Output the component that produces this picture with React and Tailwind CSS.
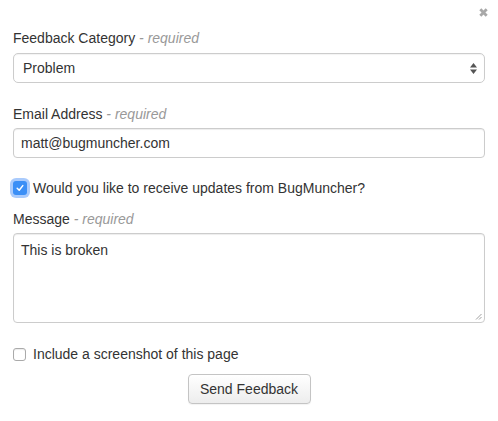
const Req = () => <span className="text-[#999] italic"> - required</span>;

export default function App() {
  return (
    <div className="relative w-[498px] h-[421px] bg-white text-[#333] text-[14px] leading-[20px] px-[13px] pt-[28px] font-['Liberation_Sans',Arial,sans-serif]">
      {/* close */}
      <svg className="absolute right-[10px] top-[8px]" width="9" height="9" viewBox="0 0 9 9">
        <path d="M1.3 1.3 L7.7 7.7 M7.7 1.3 L1.3 7.7" stroke="#a8a8a8" strokeWidth="2.8" strokeLinecap="butt" />
      </svg>

      <div className="mb-[5px]">Feedback Category<Req /></div>
      <div className="relative h-[30px] border border-[#ccc] rounded-[5px] flex items-center pl-[9px] shadow-[inset_0_1px_1px_rgba(0,0,0,0.05)]">
        Problem
        <svg className="absolute right-[7px] top-[9px]" width="7" height="11" viewBox="0 0 7 11">
          <path d="M3.5 0 L7 4.5 L0 4.5 Z M3.5 11 L7 6.5 L0 6.5 Z" fill="#555" />
        </svg>
      </div>

      <div className="mt-[21px] mb-[4px]">Email Address<Req /></div>
      <div className="h-[30px] border border-[#ccc] rounded-[4px] flex items-center pl-[7px] shadow-[inset_0_1px_1px_rgba(0,0,0,0.075)]">
        matt@bugmuncher.com
      </div>

      <div className="mt-[20px] flex items-center gap-[6px]">
        <span className="w-[14px] h-[14px] rounded-[3px] bg-[#3b8ff6] flex items-center justify-center shadow-[0_0_0_3px_rgba(100,160,250,0.55)]">
          <svg width="8" height="8" viewBox="0 0 8 8">
            <path d="M1.2 4.2 L3.2 6.2 L6.8 1.6" stroke="white" strokeWidth="1.5" fill="none" strokeLinecap="round" strokeLinejoin="round" />
          </svg>
        </span>
        Would you like to receive updates from BugMuncher?
      </div>

      <div className="mt-[11px] mb-[4px]">Message<Req /></div>
      <div className="relative h-[90px] border border-[#ccc] rounded-[4px] pl-[7px] pt-[6px] shadow-[inset_0_1px_1px_rgba(0,0,0,0.075)]">
        This is broken
        <svg className="absolute right-[2px] bottom-[2px]" width="7" height="7" viewBox="0 0 7 7">
          <path d="M6.5 1 L1 6.5 M6.5 4 L4 6.5" stroke="#888" strokeWidth="0.8" />
        </svg>
      </div>

      <div className="mt-[21px] flex items-center gap-[7px]">
        <span className="w-[13px] h-[13px] rounded-[3px] border border-[#aaa] bg-white shadow-[inset_0_1px_1px_rgba(0,0,0,0.08)]" />
        Include a screenshot of this page
      </div>

      <div className="mt-[10px] flex justify-center">
        <button className="h-[30px] w-[123px] border border-[#c4c4c4] rounded-[4px] bg-gradient-to-b from-white to-[#ededed] text-[#333] text-[14px] shadow-[0_1px_1px_rgba(0,0,0,0.05)]">
          Send Feedback
        </button>
      </div>
    </div>
  );
}
